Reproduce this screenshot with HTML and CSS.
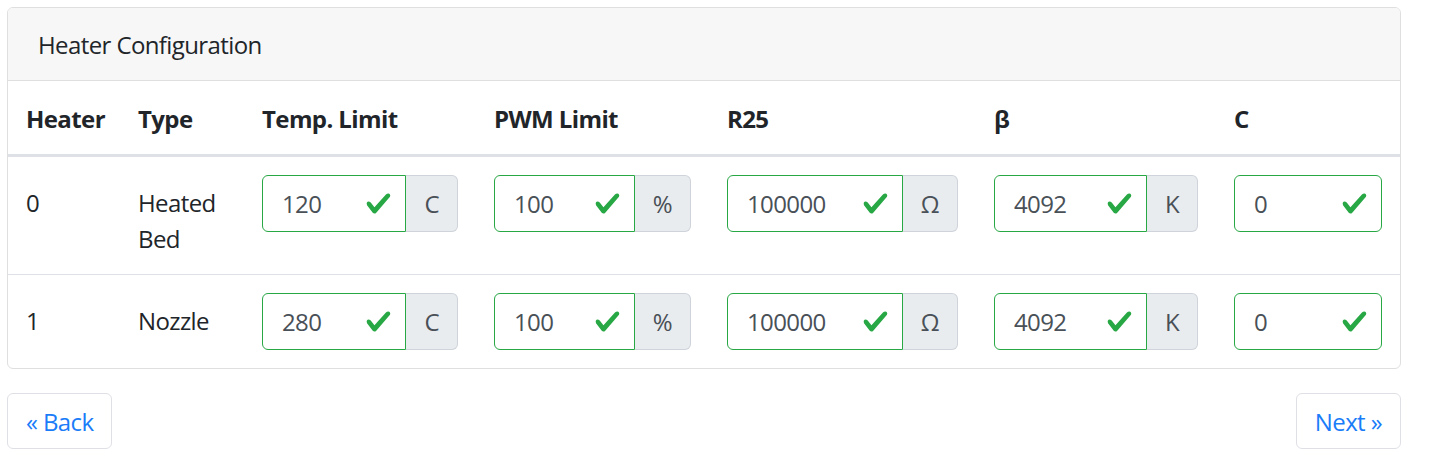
FILE: index.html
```html
<!DOCTYPE html>
<html lang="en">
<head>
<meta charset="utf-8">
<title>Heater Configuration</title>
<link rel="stylesheet" href="styles.css">
</head>
<body>
<div class="page">
  <div class="card">
    <div class="card-header">Heater Configuration</div>
    <table class="table">
      <colgroup>
        <col class="c-heater"><col class="c-type"><col class="c-temp"><col class="c-pwm"><col class="c-r25"><col class="c-beta"><col class="c-c">
      </colgroup>
      <thead>
        <tr><th>Heater</th><th>Type</th><th>Temp. Limit</th><th>PWM Limit</th><th>R25</th><th>β</th><th>C</th></tr>
      </thead>
      <tbody>
        <tr>
          <td><div class="cell-text">0</div></td>
          <td><div class="cell-text">Heated<br>Bed</div></td>
          <td><div class="input-group"><div class="form-control"><span>120</span><svg class="check" viewBox="0 0 8 8"><path d="M2.3 6.73L.6 4.53c-.4-1.040.46-1.4 1.1-.8l1.1 1.4 3.4-3.8c.6-.63 1.6-.27 1.2.7l-4 4.6c-.43.5-.8.4-1.1.1z"/></svg></div><div class="addon">C</div></div></td>
          <td><div class="input-group"><div class="form-control"><span>100</span><svg class="check" viewBox="0 0 8 8"><path d="M2.3 6.73L.6 4.53c-.4-1.040.46-1.4 1.1-.8l1.1 1.4 3.4-3.8c.6-.63 1.6-.27 1.2.7l-4 4.6c-.43.5-.8.4-1.1.1z"/></svg></div><div class="addon">%</div></div></td>
          <td><div class="input-group"><div class="form-control"><span>100000</span><svg class="check" viewBox="0 0 8 8"><path d="M2.3 6.73L.6 4.53c-.4-1.040.46-1.4 1.1-.8l1.1 1.4 3.4-3.8c.6-.63 1.6-.27 1.2.7l-4 4.6c-.43.5-.8.4-1.1.1z"/></svg></div><div class="addon">Ω</div></div></td>
          <td><div class="input-group"><div class="form-control"><span>4092</span><svg class="check" viewBox="0 0 8 8"><path d="M2.3 6.73L.6 4.53c-.4-1.040.46-1.4 1.1-.8l1.1 1.4 3.4-3.8c.6-.63 1.6-.27 1.2.7l-4 4.6c-.43.5-.8.4-1.1.1z"/></svg></div><div class="addon">K</div></div></td>
          <td><div class="input-group"><div class="form-control solo"><span>0</span><svg class="check" viewBox="0 0 8 8"><path d="M2.3 6.73L.6 4.53c-.4-1.040.46-1.4 1.1-.8l1.1 1.4 3.4-3.8c.6-.63 1.6-.27 1.2.7l-4 4.6c-.43.5-.8.4-1.1.1z"/></svg></div></div></td>
        </tr>
        <tr>
          <td><div class="cell-text">1</div></td>
          <td><div class="cell-text">Nozzle</div></td>
          <td><div class="input-group"><div class="form-control"><span>280</span><svg class="check" viewBox="0 0 8 8"><path d="M2.3 6.73L.6 4.53c-.4-1.040.46-1.4 1.1-.8l1.1 1.4 3.4-3.8c.6-.63 1.6-.27 1.2.7l-4 4.6c-.43.5-.8.4-1.1.1z"/></svg></div><div class="addon">C</div></div></td>
          <td><div class="input-group"><div class="form-control"><span>100</span><svg class="check" viewBox="0 0 8 8"><path d="M2.3 6.73L.6 4.53c-.4-1.040.46-1.4 1.1-.8l1.1 1.4 3.4-3.8c.6-.63 1.6-.27 1.2.7l-4 4.6c-.43.5-.8.4-1.1.1z"/></svg></div><div class="addon">%</div></div></td>
          <td><div class="input-group"><div class="form-control"><span>100000</span><svg class="check" viewBox="0 0 8 8"><path d="M2.3 6.73L.6 4.53c-.4-1.040.46-1.4 1.1-.8l1.1 1.4 3.4-3.8c.6-.63 1.6-.27 1.2.7l-4 4.6c-.43.5-.8.4-1.1.1z"/></svg></div><div class="addon">Ω</div></div></td>
          <td><div class="input-group"><div class="form-control"><span>4092</span><svg class="check" viewBox="0 0 8 8"><path d="M2.3 6.73L.6 4.53c-.4-1.040.46-1.4 1.1-.8l1.1 1.4 3.4-3.8c.6-.63 1.6-.27 1.2.7l-4 4.6c-.43.5-.8.4-1.1.1z"/></svg></div><div class="addon">K</div></div></td>
          <td><div class="input-group"><div class="form-control solo"><span>0</span><svg class="check" viewBox="0 0 8 8"><path d="M2.3 6.73L.6 4.53c-.4-1.040.46-1.4 1.1-.8l1.1 1.4 3.4-3.8c.6-.63 1.6-.27 1.2.7l-4 4.6c-.43.5-.8.4-1.1.1z"/></svg></div></div></td>
        </tr>
      </tbody>
    </table>
  </div>
  <div class="nav-buttons">
    <button class="btn">« Back</button>
    <button class="btn">Next »</button>
  </div>
</div>
</body>
</html>
```

FILE: styles.css
```css
html, body {
  margin: 0;
  padding: 0;
  background: #ffffff;
}

body {
  font-family: "Segoe UI", "Open Sans", "Noto Sans", sans-serif;
  font-size: 24px;
  line-height: 36px;
  letter-spacing: -0.6px;
  color: #212529;
}

.page {
  padding: 7px 0 0 7px;
  width: 1394px;
}

.card {
  border: 1px solid #dfdfdf;
  border-radius: 6px;
  overflow: hidden;
  background: #ffffff;
}

.card-header {
  background: #f7f7f7;
  border-bottom: 1px solid #dfdfdf;
  padding: 19px 30px 17px 30px;
  height: 36px;
}

.table {
  width: 100%;
  border-collapse: collapse;
  table-layout: fixed;
}

.c-heater { width: 112px; }
.c-type { width: 124px; }
.c-temp { width: 232px; }
.c-pwm { width: 233px; }
.c-r25 { width: 267px; }
.c-beta { width: 240px; }
.c-c { width: 184px; }

.table th {
  text-align: left;
  font-weight: 700;
  padding: 20px 18px 17px 18px;
  border-bottom: 3px solid #dee2e6;
  white-space: nowrap;
}

.table td {
  vertical-align: top;
  padding: 18px;
}

.table tbody tr + tr td {
  border-top: 1px solid #dee2e6;
}

.cell-text {
  padding-top: 10px;
  margin-bottom: -1px;
}

.input-group {
  display: flex;
  height: 57px;
}

.form-control {
  flex: 1;
  display: flex;
  align-items: center;
  justify-content: space-between;
  box-sizing: border-box;
  height: 57px;
  padding: 1px 13px 0 19px;
  border: 1px solid #28a745;
  border-radius: 6px 0 0 6px;
  color: #495057;
  background: #ffffff;
}

.form-control.solo {
  border-radius: 6px;
}

.check {
  width: 27px;
  height: 27px;
  fill: #28a745;
  flex: none;
  margin-top: -1px;
}

.addon {
  display: flex;
  align-items: center;
  box-sizing: border-box;
  height: 57px;
  padding: 1px 18px 0 18px;
  background: #e9ecef;
  border: 1px solid #ced4da;
  border-left: none;
  border-radius: 0 6px 6px 0;
  color: #495057;
}

.nav-buttons {
  display: flex;
  justify-content: space-between;
  margin-top: 24px;
}

.btn {
  font-family: inherit;
  font-size: 24px;
  line-height: 36px;
  letter-spacing: -0.6px;
  height: 56px;
  padding: 2px 18px 0 18px;
  background: #ffffff;
  color: #1a7cf8;
  border: 1px solid #dfe0e6;
  border-radius: 6px;
}
```
